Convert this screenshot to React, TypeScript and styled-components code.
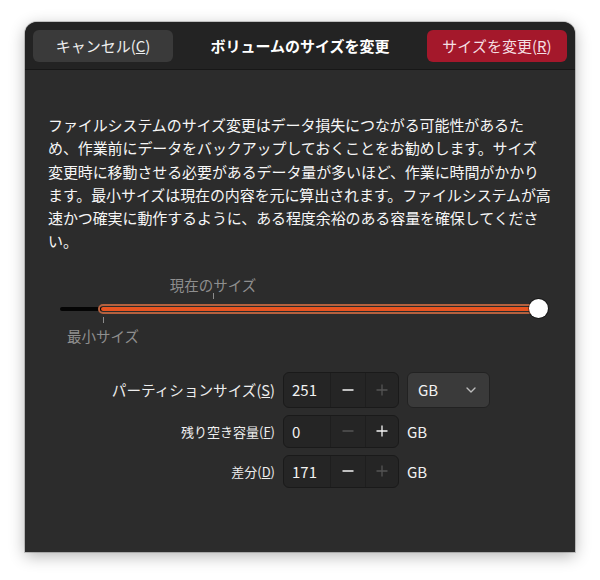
import React from 'react'
import styled, { createGlobalStyle } from 'styled-components'
import { ChevronDown } from 'lucide-react'

const GlobalStyle = createGlobalStyle`
  html, body {
    margin: 0;
    background: #ffffff;
  }
  body {
    font-family: "Noto Sans CJK JP", "Noto Sans", sans-serif;
    -webkit-font-smoothing: antialiased;
  }
`

const Page = styled.div`
  padding: 22px 25px 28px;
`

const Window = styled.div`
  width: 550px;
  height: 530px;
  background: #2c2c2c;
  border-radius: 12px 12px 0 0;
  box-shadow: 0 0 0 1px rgba(0, 0, 0, 0.18), 0 4px 16px rgba(0, 0, 0, 0.3);
  display: flex;
  flex-direction: column;
  overflow: hidden;
  color: #ffffff;
`

const HeaderBar = styled.header`
  height: 47px;
  flex-shrink: 0;
  background: #232323;
  border-bottom: 1px solid #171717;
  padding: 0 8px;
  display: flex;
  align-items: center;
  justify-content: space-between;
`

const HeaderButton = styled.button<{ $destructive?: boolean }>`
  width: 140px;
  height: 32px;
  border: none;
  border-radius: 6px;
  background: ${(p) => (p.$destructive ? '#a4182b' : '#3a3a3a')};
  color: ${(p) => (p.$destructive ? '#f4dfe2' : '#ededed')};
  font-family: inherit;
  font-size: 15px;
  padding: 0;
  display: flex;
  align-items: center;
  justify-content: center;
`

const Title = styled.h1`
  margin: 0;
  font-size: 15px;
  font-weight: 700;
  color: #ffffff;
`

const Content = styled.main`
  padding: 43px 23px 0;
  display: flex;
  flex-direction: column;
`

const Description = styled.p`
  margin: 0;
  font-size: 15px;
  line-height: 23.3px;
  color: #f6f6f6;
  white-space: nowrap;
  letter-spacing: -0.1px;
`

const Slider = styled.div`
  position: relative;
  height: 76px;
  margin: 19px 4px 0 12px;
`

const TroughLeft = styled.div`
  position: absolute;
  left: 0;
  top: 35px;
  width: 44px;
  height: 4px;
  border-radius: 2px;
  background: #050505;
`

const Fill = styled.div`
  position: absolute;
  left: 38px;
  top: 32px;
  width: 441px;
  height: 10px;
  box-sizing: border-box;
  border: 2px solid #b5613f;
  padding: 1px;
  border-radius: 5px;
  background: #e95420;
  background-clip: content-box;
`

const Knob = styled.div`
  position: absolute;
  left: 469px;
  top: 27px;
  width: 19px;
  height: 19px;
  border-radius: 50%;
  background: #ffffff;
  box-shadow: 0 0 0 1px rgba(0, 0, 0, 0.45);
`

const Tick = styled.div<{ $x: number; $top: number }>`
  position: absolute;
  left: ${(p) => p.$x}px;
  top: ${(p) => p.$top}px;
  width: 1px;
  height: 6px;
  background: #8c8c8c;
`

const MarkLabel = styled.span<{ $x: number; $top: number }>`
  position: absolute;
  left: ${(p) => p.$x}px;
  top: ${(p) => p.$top}px;
  transform: translateX(-50%);
  font-size: 14.5px;
  line-height: 17px;
  color: #8f8f8f;
  white-space: nowrap;
`

const Form = styled.div`
  margin-top: 24px;
  display: grid;
  grid-template-columns: 165px 116px 83px;
  grid-auto-rows: auto;
  column-gap: 8px;
  row-gap: 7px;
  justify-content: center;
  align-items: center;
`

const FieldLabel = styled.label<{ $large?: boolean }>`
  justify-self: end;
  font-size: ${(p) => (p.$large ? '14.6px' : '13px')};
  color: #eeeeee;
  white-space: nowrap;
`

const SpinBox = styled.div<{ $tall?: boolean }>`
  height: ${(p) => (p.$tall ? 36 : 33)}px;
  box-sizing: border-box;
  border: 1px solid #1a1a1a;
  border-radius: 6px;
  background: #252525;
  display: grid;
  grid-template-columns: 46px 35px 1fr;
  overflow: hidden;
`

const SpinValue = styled.div`
  display: flex;
  align-items: center;
  padding-left: 8px;
  font-size: 15px;
  color: #f2f2f2;
`

const SpinButton = styled.div<{ $disabled?: boolean }>`
  display: flex;
  align-items: center;
  justify-content: center;
  border-left: 1px solid #1e1e1e;
  color: ${(p) => (p.$disabled ? '#545454' : '#f4f4f4')};
`

const Dropdown = styled.div`
  height: 36px;
  box-sizing: border-box;
  border: 1px solid #222222;
  border-radius: 6px;
  background: #3a3a3a;
  display: flex;
  align-items: center;
  justify-content: space-between;
  padding: 0 10px 0 10px;
  font-size: 15px;
  color: #f2f2f2;
`

const Unit = styled.span`
  font-size: 15px;
  color: #f2f2f2;
`

function MinusIcon() {
  return (
    <svg width="14" height="14" viewBox="0 0 14 14">
      <path d="M1.5 7h11" stroke="currentColor" strokeWidth="1.3" />
    </svg>
  )
}

function PlusIcon() {
  return (
    <svg width="14" height="14" viewBox="0 0 14 14">
      <path d="M1.5 7h11M7 1.5v11" stroke="currentColor" strokeWidth="1.3" />
    </svg>
  )
}

type SpinProps = {
  value: string
  canDecrease: boolean
  canIncrease: boolean
  tall?: boolean
}

function Spin({ value, canDecrease, canIncrease, tall }: SpinProps) {
  return (
    <SpinBox $tall={tall}>
      <SpinValue>{value}</SpinValue>
      <SpinButton $disabled={!canDecrease}>
        <MinusIcon />
      </SpinButton>
      <SpinButton $disabled={!canIncrease}>
        <PlusIcon />
      </SpinButton>
    </SpinBox>
  )
}

export default function App() {
  return (
    <Page>
      <GlobalStyle />
      <Window>
        <HeaderBar>
          <HeaderButton>
            キャンセル(<u>C</u>)
          </HeaderButton>
          <Title>ボリュームのサイズを変更</Title>
          <HeaderButton $destructive>
            サイズを変更(<u>R</u>)
          </HeaderButton>
        </HeaderBar>
        <Content>
          <Description>
            ファイルシステムのサイズ変更はデータ損失につながる可能性があるた
            <br />
            め、作業前にデータをバックアップしておくことをお勧めします。サイズ
            <br />
            変更時に移動させる必要があるデータ量が多いほど、作業に時間がかかり
            <br />
            ます。最小サイズは現在の内容を元に算出されます。ファイルシステムが高
            <br />
            速かつ確実に動作するように、ある程度余裕のある容量を確保してくださ
            <br />
            い。
          </Description>

          <Slider>
            <MarkLabel $x={153} $top={4}>
              現在のサイズ
            </MarkLabel>
            <Tick $x={153} $top={21} />
            <TroughLeft />
            <Fill />
            <Knob />
            <Tick $x={43} $top={45} />
            <MarkLabel $x={43} $top={55}>
              最小サイズ
            </MarkLabel>
          </Slider>

          <Form>
            <FieldLabel $large>
              パーティションサイズ(<u>S</u>)
            </FieldLabel>
            <Spin value="251" canDecrease canIncrease={false} tall />
            <Dropdown>
              GB
              <ChevronDown size={16} strokeWidth={2} color="#bdbdbd" />
            </Dropdown>

            <FieldLabel>
              残り空き容量(<u>F</u>)
            </FieldLabel>
            <Spin value="0" canDecrease={false} canIncrease />
            <Unit>GB</Unit>

            <FieldLabel>
              差分(<u>D</u>)
            </FieldLabel>
            <Spin value="171" canDecrease canIncrease={false} />
            <Unit>GB</Unit>
          </Form>
        </Content>
      </Window>
    </Page>
  )
}
